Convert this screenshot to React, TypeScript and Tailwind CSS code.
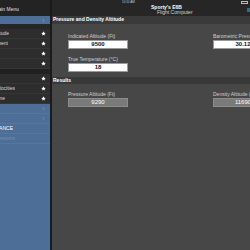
import { ChevronRight } from "lucide-react";

const font = { fontFamily: '"Liberation Sans", Arial, sans-serif' };

function Star() {
  return (
    <svg width="5" height="5" viewBox="0 0 24 24" className="fill-white">
      <path d="M12 1.5l3.2 7 7.6.8-5.7 5.1 1.6 7.5L12 18l-6.7 3.9 1.6-7.5L1.2 9.3l7.6-.8z" />
    </svg>
  );
}

function MenuRow({ label, end, star }: { label?: string; end?: number; star?: boolean }) {
  return (
    <div className="h-[10px] flex items-center justify-between border-b border-[#363636] pr-[4px]">
      <div
        className="overflow-hidden flex justify-end whitespace-nowrap text-[5px] leading-none text-[#d8d8d8]"
        style={{ width: end ?? 0 }}
      >
        {label}
      </div>
      {star && <Star />}
    </div>
  );
}

function BlueRow({ label, end, chevron, faint }: { label?: string; end?: number; chevron?: boolean; faint?: boolean }) {
  return (
    <div className="h-[10px] flex items-center justify-between border-b border-[#55779e] pr-[4px]">
      <div
        className={
          faint
            ? "overflow-hidden flex justify-end whitespace-nowrap text-[5px] leading-none text-[#6f8fb5]"
            : "overflow-hidden flex justify-end whitespace-nowrap text-[5px] leading-none text-white"
        }
        style={{ width: end ?? 0 }}
      >
        {label}
      </div>
      {chevron && <ChevronRight size={5} strokeWidth={3} className="text-[#7d9cc0]" />}
    </div>
  );
}

function Field({ label, value, output }: { label: string; value: string; output?: boolean }) {
  return (
    <div className="flex flex-col w-[60px]">
      <div className="text-[5px] leading-[5px] text-[#d0d0d0] whitespace-nowrap">{label}</div>
      <div
        className={
          output
            ? "mt-[1px] h-[9px] bg-[#7a7a7a] border border-[#8c8c8c] flex items-center justify-center text-[6px] text-white whitespace-nowrap"
            : "mt-[1px] h-[9px] bg-white border border-[#9a9a9a] flex items-center justify-center text-[6px] font-bold text-[#111] whitespace-nowrap"
        }
      >
        {value}
      </div>
    </div>
  );
}

export default function App() {
  return (
    <div className="w-[250px] h-[250px] overflow-hidden flex bg-[#474747]" style={font}>
      <div className="w-[50px] shrink-0 flex flex-col bg-[#2d2d2d]">
        <div className="h-[16px] bg-[#232323] flex items-end pb-[4px]">
          <div className="w-[19px] overflow-hidden flex justify-end whitespace-nowrap text-[5px] leading-none text-[#e0e0e0]">
            Main Menu
          </div>
        </div>
        <div className="h-[8px] bg-[#4d6f97] flex items-center justify-end pr-[4px]">
          <ChevronRight size={5} strokeWidth={3} className="text-[#86a5c8]" />
        </div>
        <div className="h-[5px] bg-[#262626]" />
        <MenuRow label="Pressure Altitude" end={9} star />
        <MenuRow label="Wind Component" end={8} star />
        <MenuRow star />
        <MenuRow star />
        <div className="h-[5px] bg-[#212121]" />
        <MenuRow star />
        <MenuRow label="Wind Velocities" end={15} star />
        <MenuRow label="Time Zone" end={5} star />
        <div className="flex-1 bg-[#4d6f97] flex flex-col">
          <BlueRow chevron />
          <BlueRow chevron />
          <BlueRow label="WEIGHT & BALANCE" end={13} />
          <BlueRow label="Conversions" end={15} faint />
        </div>
      </div>
      <div className="w-[2px] shrink-0 bg-[#1b1b1b]" />
      <div className="flex-1 flex flex-col min-w-0">
        <div className="h-[16px] bg-[#262626] relative">
          <div className="absolute left-[70px] top-[1px] text-[3px] leading-none text-[#cfcfcf]">10:10 AM</div>
          <div className="absolute right-[2px] top-[1px] w-[7px] h-[3px] border-[0.5px] border-[#bbb]" />
          <div className="absolute right-0 top-[8px] w-[3px] h-[4px] bg-[#2f6f86]" />
          <div className="absolute left-[99px] top-[5px] text-[5px] leading-none font-bold text-white whitespace-nowrap">
            Sporty's E6B
          </div>
          <div className="absolute left-[105px] top-[10px] text-[5px] leading-none text-[#d5d5d5] whitespace-nowrap">
            Flight Computer
          </div>
        </div>
        <div className="h-[8px] bg-[#3a3a3a] flex items-center pl-[1px] text-[5px] font-bold text-white whitespace-nowrap">
          Pressure and Density Altitude
        </div>
        <div className="pl-[16px] pt-[10px] pb-[5px] grid grid-cols-[60px_60px] gap-x-[85px] gap-y-[8px]">
          <Field label="Indicated Altitude (Ft)" value="9500" />
          <Field label="Barometric Pressure (In Hg)" value="30.12" />
          <Field label="True Temperature (°C)" value="18" />
        </div>
        <div className="h-[7px] bg-[#383838] flex items-center pl-[1px] text-[5px] font-bold text-white whitespace-nowrap">
          Results
        </div>
        <div className="pl-[16px] pt-[8px] grid grid-cols-[60px_60px] gap-x-[85px]">
          <Field label="Pressure Altitude (Ft)" value="9290" output />
          <Field label="Density Altitude (Ft)" value="11690" output />
        </div>
      </div>
    </div>
  );
}
